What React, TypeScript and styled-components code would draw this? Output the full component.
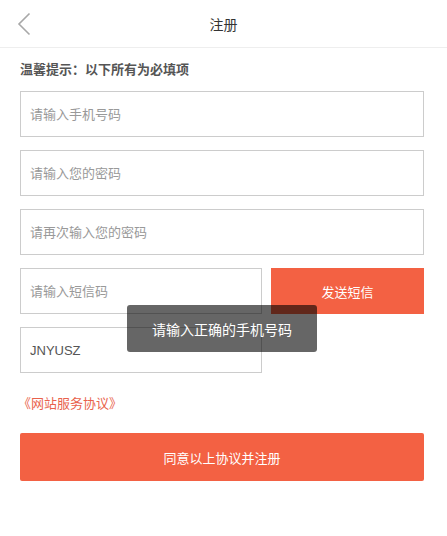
import React, { useState } from 'react';
import styled, { createGlobalStyle } from 'styled-components';

const GlobalStyle = createGlobalStyle`
  html, body {
    margin: 0;
    padding: 0;
    background: #fff;
    font-family: "Liberation Sans", "Noto Sans CJK SC", sans-serif;
  }
  * { box-sizing: border-box; }
`;

const Page = styled.div`
  position: relative;
  width: 100%;
  min-height: 536px;
  background: #fff;
`;

const Header = styled.div`
  position: relative;
  height: 48px;
  border-bottom: 1px solid #eeeeee;
  display: flex;
  align-items: center;
  justify-content: center;
`;

const BackButton = styled.button`
  position: absolute;
  left: 12px;
  top: 10px;
  width: 24px;
  height: 28px;
  padding: 0;
  border: none;
  background: transparent;
  display: flex;
  align-items: center;
  justify-content: center;
  cursor: pointer;
`;

const Title = styled.h1`
  margin: 0;
  font-size: 14px;
  font-weight: normal;
  color: #333;
`;

const Form = styled.div`
  padding: 0 23px 0 20px;
  display: flex;
  flex-direction: column;
`;

const Tip = styled.p`
  margin: 14px 0 0;
  height: 29px;
  line-height: 16px;
  font-size: 13px;
  font-weight: bold;
  color: #555;
`;

const Row = styled.div`
  display: flex;
  justify-content: space-between;
  margin-bottom: 13px;
`;

const Input = styled.input<{ $half?: boolean }>`
  width: ${p => (p.$half ? '242px' : '100%')};
  height: 46px;
  border: 1px solid #cccccc;
  border-radius: 0;
  padding: 0 9px;
  font-size: 13px;
  font-family: inherit;
  color: #555;
  outline: none;
  &::placeholder {
    color: #999;
  }
`;

const SmsButton = styled.button`
  width: 153px;
  height: 46px;
  border: none;
  background: #f36143;
  color: #fff;
  font-size: 13px;
  font-family: inherit;
  cursor: pointer;
`;

const AgreementLink = styled.a`
  display: block;
  height: 47px;
  line-height: 36px;
  font-size: 13px;
  color: #e9624c;
  text-decoration: none;
  margin-left: -2px;
`;

const SubmitButton = styled.button`
  width: 100%;
  height: 48px;
  border: none;
  border-radius: 2px;
  background: #f36143;
  color: #fff;
  font-size: 13px;
  font-family: inherit;
  cursor: pointer;
`;

const Toast = styled.div`
  position: absolute;
  left: 127px;
  top: 305px;
  width: 190px;
  height: 47px;
  border-radius: 3px;
  background: rgba(0, 0, 0, 0.6);
  color: #fff;
  font-size: 14px;
  display: flex;
  align-items: center;
  justify-content: center;
`;

export default function App() {
  const [code, setCode] = useState('JNYUSZ');

  return (
    <Page>
      <GlobalStyle />
      <Header>
        <BackButton aria-label="返回">
          <svg width="14" height="24" viewBox="0 0 14 24">
            <path d="M12.5 1.5 L2 12 L12.5 22.5" fill="none" stroke="#a8a8a8" strokeWidth="1.6" />
          </svg>
        </BackButton>
        <Title>注册</Title>
      </Header>
      <Form>
        <Tip>温馨提示：以下所有为必填项</Tip>
        <Row>
          <Input placeholder="请输入手机号码" />
        </Row>
        <Row>
          <Input type="password" placeholder="请输入您的密码" />
        </Row>
        <Row>
          <Input type="password" placeholder="请再次输入您的密码" />
        </Row>
        <Row>
          <Input $half placeholder="请输入短信码" />
          <SmsButton>发送短信</SmsButton>
        </Row>
        <Row>
          <Input $half value={code} onChange={e => setCode(e.target.value)} />
        </Row>
        <AgreementLink href="#">《网站服务协议》</AgreementLink>
        <SubmitButton>同意以上协议并注册</SubmitButton>
      </Form>
      <Toast>请输入正确的手机号码</Toast>
    </Page>
  );
}
